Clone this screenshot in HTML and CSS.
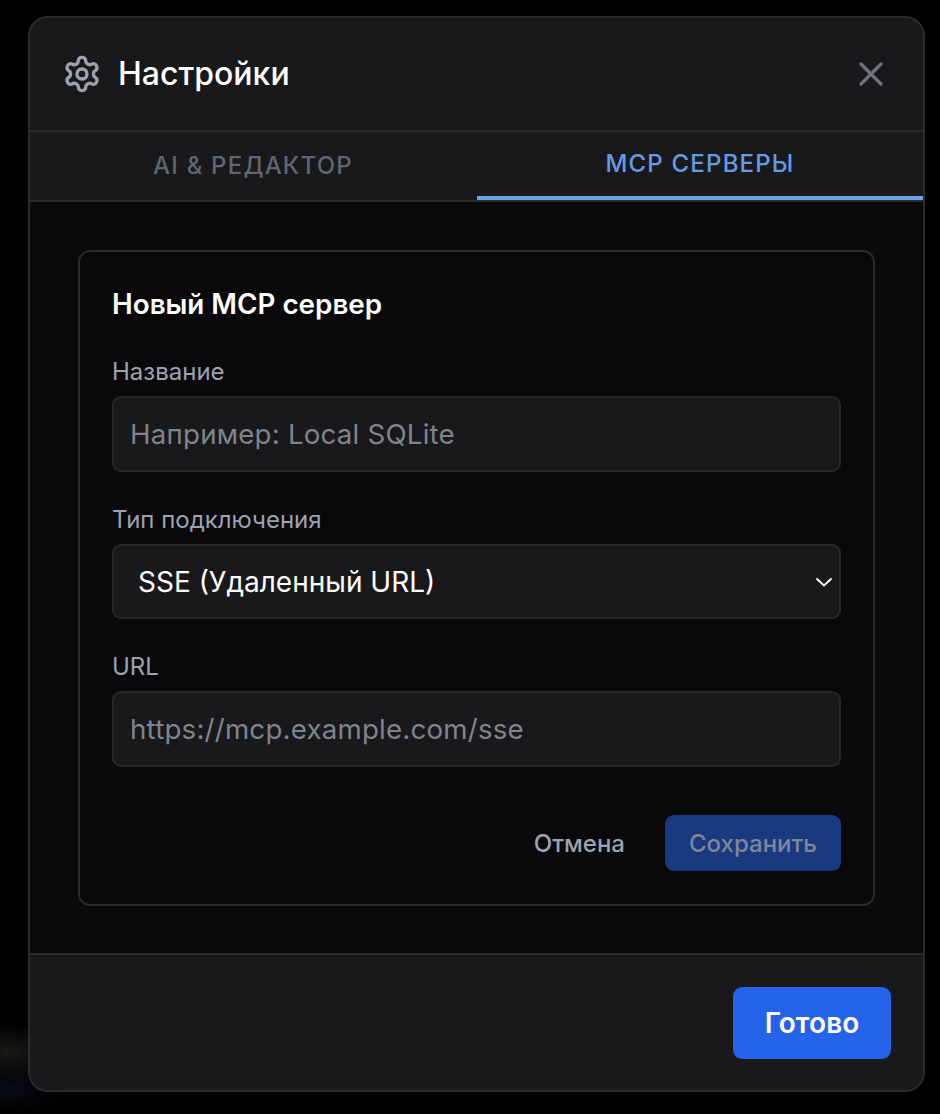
FILE: index.html
```html
<!DOCTYPE html>
<html lang="ru">
<head>
<meta charset="utf-8">
<title>Настройки</title>
<link rel="stylesheet" href="styles.css">
</head>
<body>
<div class="modal">
  <header class="head">
    <div class="head-title">
      <svg class="gear" viewBox="0 0 24 24" fill="none" stroke="currentColor" stroke-width="2" stroke-linecap="round" stroke-linejoin="round"><path d="M12.22 2h-.44a2 2 0 0 0-2 2v.18a2 2 0 0 1-1 1.73l-.43.25a2 2 0 0 1-2 0l-.15-.08a2 2 0 0 0-2.73.73l-.22.38a2 2 0 0 0 .73 2.73l.15.1a2 2 0 0 1 1 1.72v.51a2 2 0 0 1-1 1.74l-.15.09a2 2 0 0 0-.73 2.73l.22.38a2 2 0 0 0 2.73.73l.15-.08a2 2 0 0 1 2 0l.43.25a2 2 0 0 1 1 1.73V20a2 2 0 0 0 2 2h.44a2 2 0 0 0 2-2v-.18a2 2 0 0 1 1-1.73l.43-.25a2 2 0 0 1 2 0l.15.08a2 2 0 0 0 2.73-.73l.22-.39a2 2 0 0 0-.73-2.73l-.15-.08a2 2 0 0 1-1-1.74v-.5a2 2 0 0 1 1-1.74l.15-.09a2 2 0 0 0 .73-2.73l-.22-.38a2 2 0 0 0-2.73-.73l-.15.08a2 2 0 0 1-2 0l-.43-.25a2 2 0 0 1-1-1.73V4a2 2 0 0 0-2-2z"/><circle cx="12" cy="12" r="3"/></svg>
      <h1 class="title">Настройки</h1>
    </div>
    <svg class="close" viewBox="0 0 24 24" fill="none" stroke="currentColor" stroke-width="2" stroke-linecap="round"><path d="M18 6 6 18M6 6l12 12"/></svg>
  </header>
  <nav class="tabs">
    <div class="tab">AI &amp; РЕДАКТОР</div>
    <div class="tab tab-active">MCP СЕРВЕРЫ</div>
  </nav>
  <main class="body">
    <section class="card">
      <h2 class="card-title">Новый MCP сервер</h2>
      <div class="field">
        <div class="label">Название</div>
        <div class="input placeholder">Например: Local SQLite</div>
      </div>
      <div class="field">
        <div class="label">Тип подключения</div>
        <div class="input select">
          <span>SSE (Удаленный URL)</span>
          <svg class="chevron" viewBox="0 0 18 10" fill="none" stroke="currentColor" stroke-width="1.8"><path d="M1.5 1.5 9 8.5l7.5-7"/></svg>
        </div>
      </div>
      <div class="field">
        <div class="label">URL</div>
        <div class="input placeholder">https://mcp.example.com/sse</div>
      </div>
      <div class="card-actions">
        <button class="btn-cancel">Отмена</button>
        <button class="btn-save">Сохранить</button>
      </div>
    </section>
  </main>
  <footer class="foot">
    <button class="btn-done">Готово</button>
  </footer>
</div>
</body>
</html>
```
FILE: styles.css
```css
* { box-sizing: border-box; }
html, body { height: 100%; }
body {
  margin: 0;
  height: 1114px;
  overflow: hidden;
  padding: 16px 15px 22px 28px;
  font-family: Inter, "Liberation Sans", sans-serif;
  background:
    radial-gradient(ellipse 60px 28px at 10px 1052px, #1a1916 0%, rgba(26,25,22,0) 100%),
    radial-gradient(ellipse 60px 26px at 10px 1088px, #070b15 0%, rgba(7,11,21,0) 100%),
    #000;
}
.modal {
  height: 1076px;
  display: flex;
  flex-direction: column;
  background: #19191b;
  border: 2px solid #2b2b2e;
  border-radius: 20px;
  overflow: hidden;
}
.head {
  height: 114px;
  flex: none;
  display: flex;
  align-items: center;
  justify-content: space-between;
  padding: 0 32px;
  border-bottom: 2px solid #2b2b2e;
}
.head-title { display: flex; align-items: center; gap: 16px; }
.gear { width: 40px; height: 40px; color: #9ca3af; }
.title { margin: 0; padding-bottom: 2px; font-size: 32px; font-weight: 500; color: #fff; }
.close { width: 40px; height: 40px; color: #6b7280; }
.tabs {
  height: 70px;
  flex: none;
  display: flex;
  border-bottom: 2px solid #2b2b2e;
}
.tab {
  flex: 1;
  display: flex;
  align-items: center;
  justify-content: center;
  padding-bottom: 2px;
  font-size: 24px;
  font-weight: 500;
  letter-spacing: 1.2px;
  color: #5f6672;
}
.tab-active {
  color: #639ce5;
  border-bottom: 4px solid #6ba2e8;
  height: 68px;
  padding-bottom: 1px;
  margin-left: 1px;
}
.body {
  flex: 1;
  background: #0b0a09;
  padding: 48px 48px 47px 48px;
}
.card {
  height: 656px;
  background: #09090b;
  border: 2px solid #2b2b2e;
  border-radius: 12px;
  padding: 32px;
}
.card-title { margin: 0 0 33px; font-size: 27.8px; font-weight: 600; line-height: 40px; color: #fff; }
.field { margin-bottom: 33px; }
.label { font-size: 24px; line-height: 30px; margin-bottom: 9px; color: #9ca3af; }
.input {
  height: 76px;
  display: flex;
  align-items: center;
  padding: 0 16px;
  background: #19191b;
  border: 2px solid #27272a;
  border-radius: 9px;
  font-size: 27.7px;
  letter-spacing: 0.2px;
}
.placeholder { color: #7f848d; }
.select { height: 75px; color: #fff; justify-content: space-between; padding: 0 6px 0 24px; font-size: 28px; letter-spacing: 0; }
.chevron { width: 18px; height: 10px; color: #fff; }
.card-actions { display: flex; justify-content: flex-end; align-items: center; gap: 40px; margin-top: 48px; }
.btn-cancel, .btn-save, .btn-done { font-family: inherit; border: 0; padding: 0; }
.btn-cancel { background: none; font-size: 24px; font-weight: 500; color: #9ca3af; }
.btn-save { width: 176px; height: 56px; background: #1a3a80; border-radius: 9px; font-size: 24px; font-weight: 500; color: #7e8799; }
.foot {
  flex: 1;
  display: flex;
  align-items: center;
  justify-content: flex-end;
  padding: 0 32px 0 0;
  background: #19191b;
  border-top: 2px solid #2b2b2e;
}
.btn-done { width: 158px; height: 72px; background: #2563eb; border-radius: 9px; font-size: 28px; font-weight: 600; color: #fff; }
```
